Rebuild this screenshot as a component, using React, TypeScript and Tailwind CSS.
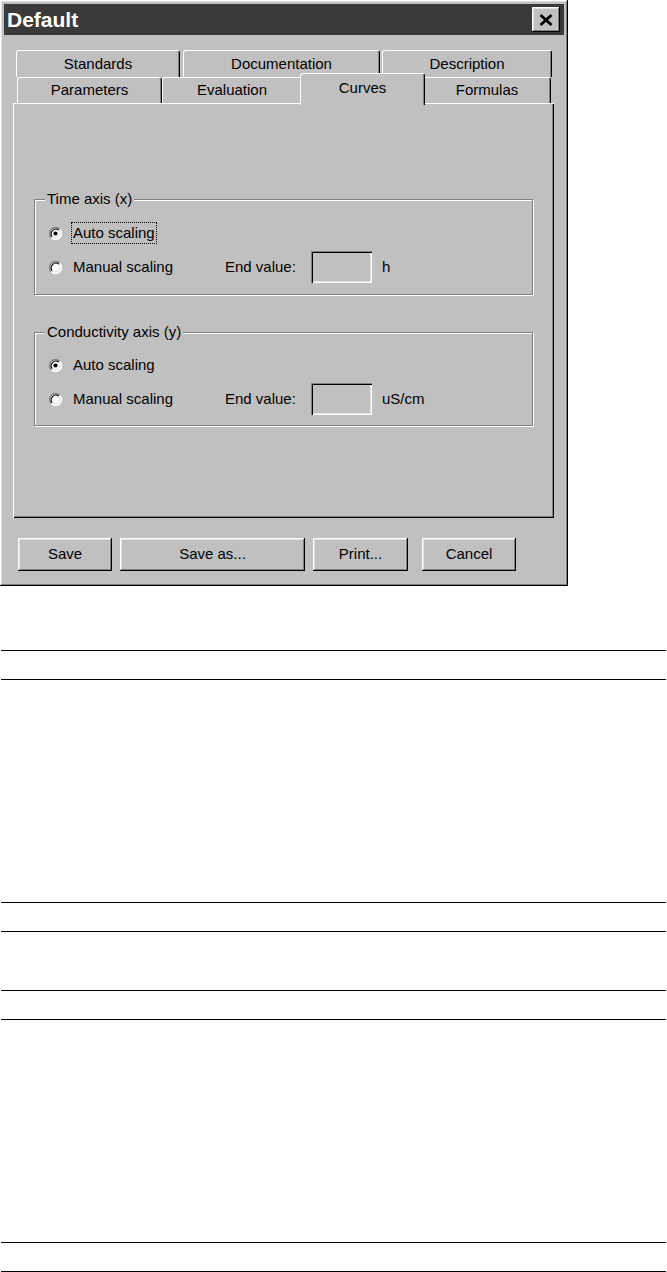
import React from "react"

const raised =
  "shadow-[inset_-1px_-1px_0_#000,inset_1px_1px_0_#fff,inset_-2px_-2px_0_#808080,inset_2px_2px_0_#dfdfdf]"

function Radio({ checked }: { checked?: boolean }) {
  return (
    <svg width="13" height="13" viewBox="0 0 13 13" className="shrink-0">
      <circle cx="6.5" cy="6.5" r="5.5" fill="#fff" />
      <path d="M2.3 10.7 A5.9 5.9 0 0 1 10.7 2.3" fill="none" stroke="#808080" strokeWidth="1.3" />
      <path d="M3.2 9.8 A4.7 4.7 0 0 1 9.8 3.2" fill="none" stroke="#000" strokeWidth="1.1" />
      <path d="M10.7 2.3 A5.9 5.9 0 0 1 2.3 10.7" fill="none" stroke="#fff" strokeWidth="1.3" />
      <path d="M9.8 3.2 A4.7 4.7 0 0 1 3.2 9.8" fill="none" stroke="#dfdfdf" strokeWidth="1.1" />
      {checked && <circle cx="6.5" cy="6.5" r="2.1" fill="#000" />}
    </svg>
  )
}

function Tab({ label, className }: { label: string; className: string }) {
  return (
    <div
      className={`flex items-center justify-center bg-[#c0c0c0] rounded-t-[3px] border-t border-l border-r border-t-white border-l-white border-r-black shadow-[inset_-1px_0_0_#808080] ${className}`}
    >
      {label}
    </div>
  )
}

function AxisGroup({
  title,
  unit,
  focused,
  className,
}: {
  title: string
  unit: string
  focused?: boolean
  className: string
}) {
  return (
    <div
      className={`relative ml-[21px] w-[499px] border border-[#808080] shadow-[1px_1px_0_#fff,inset_1px_1px_0_#fff] ${className}`}
    >
      <span className="absolute -top-[10px] left-[10px] bg-[#c0c0c0] px-[2px] leading-[17px]">{title}</span>
      <div className="flex h-[34px] items-center pl-[14px]">
        <Radio checked />
        <span
          className={`ml-[9px] border px-[1px] leading-[20px] ${focused ? "border-dotted border-black" : "border-transparent"}`}
        >
          Auto scaling
        </span>
      </div>
      <div className="flex h-[34px] items-center pl-[14px]">
        <div className="flex w-[176px] items-center">
          <Radio />
          <span className="ml-[9px] border border-transparent px-[1px]">Manual scaling</span>
        </div>
        <span className="w-[86px]">End value:</span>
        <div className="h-[32px] w-[61px] shadow-[inset_1px_1px_0_#808080,inset_2px_2px_0_#000,inset_-1px_-1px_0_#fff,inset_-2px_-2px_0_#dfdfdf]" />
        <span className="ml-[10px]">{unit}</span>
      </div>
    </div>
  )
}

function Button({ label, className }: { label: string; className: string }) {
  return (
    <button className={`flex h-[33px] items-center justify-center bg-[#c0c0c0] ${raised} ${className}`}>
      {label}
    </button>
  )
}

function Rule() {
  return <div className="ml-[1px] h-px w-[665px] bg-black" />
}

export default function App() {
  return (
    <div className="min-h-[1272px] w-[667px] bg-white font-['Liberation_Sans',Arial,sans-serif] text-[15px] text-black">
      <div className={`h-[586px] w-[568px] bg-[#c0c0c0] p-[4px] ${raised}`}>
        {/* title bar */}
        <div className="flex h-[31px] items-center justify-between bg-[#3a3a3a] pl-[3px] pr-[4px]">
          <span className="text-[21px] font-bold leading-none text-white">Default</span>
          <button className={`flex h-[25px] w-[28px] items-center justify-center bg-[#c0c0c0] ${raised}`}>
            <svg width="14" height="12" viewBox="0 0 14 12">
              <path d="M1.5 1 L12.5 11 M12.5 1 L1.5 11" stroke="#000" strokeWidth="2.8" />
            </svg>
          </button>
        </div>

        {/* tabs */}
        <div className="mt-[15px] flex h-[27px]">
          <Tab label="Standards" className="ml-[12px] w-[164px]" />
          <Tab label="Documentation" className="ml-[3px] w-[197px]" />
          <Tab label="Description" className="ml-[2px] w-[170px]" />
        </div>
        <div className="flex h-[26px]">
          <Tab label="Parameters" className="ml-[13px] w-[145px]" />
          <Tab label="Evaluation" className="w-[140px]" />
          <Tab label="Curves" className="relative z-10 -mx-[2px] -mt-[4px] h-[32px] w-[125px] pb-[2px]" />
          <Tab label="Formulas" className="w-[128px]" />
        </div>

        {/* panel */}
        <div className="ml-[9px] h-[415px] w-[541px] pt-[96px] shadow-[inset_1px_1px_0_#fff,inset_-1px_-1px_0_#000,inset_-2px_-2px_0_#808080]">
          <AxisGroup title="Time axis (x)" unit="h" focused className="h-[96px] pt-[16px]" />
          <AxisGroup title="Conductivity axis (y)" unit="uS/cm" className="mt-[37px] h-[94px] pt-[15px]" />
        </div>

        {/* buttons */}
        <div className="mt-[20px] flex">
          <Button label="Save" className="ml-[14px] w-[94px]" />
          <Button label="Save as..." className="ml-[8px] w-[185px]" />
          <Button label="Print..." className="ml-[8px] w-[95px]" />
          <Button label="Cancel" className="ml-[14px] w-[94px]" />
        </div>
      </div>

      {/* ruled tables below */}
      <div className="mt-[64px]">
        <Rule />
        <div className="h-[28px]" />
        <Rule />
        <div className="h-[222px]" />
        <Rule />
        <div className="h-[28px]" />
        <Rule />
        <div className="h-[58px]" />
        <Rule />
        <div className="h-[28px]" />
        <Rule />
        <div className="h-[222px]" />
        <Rule />
        <div className="h-[28px]" />
        <Rule />
      </div>
    </div>
  )
}
